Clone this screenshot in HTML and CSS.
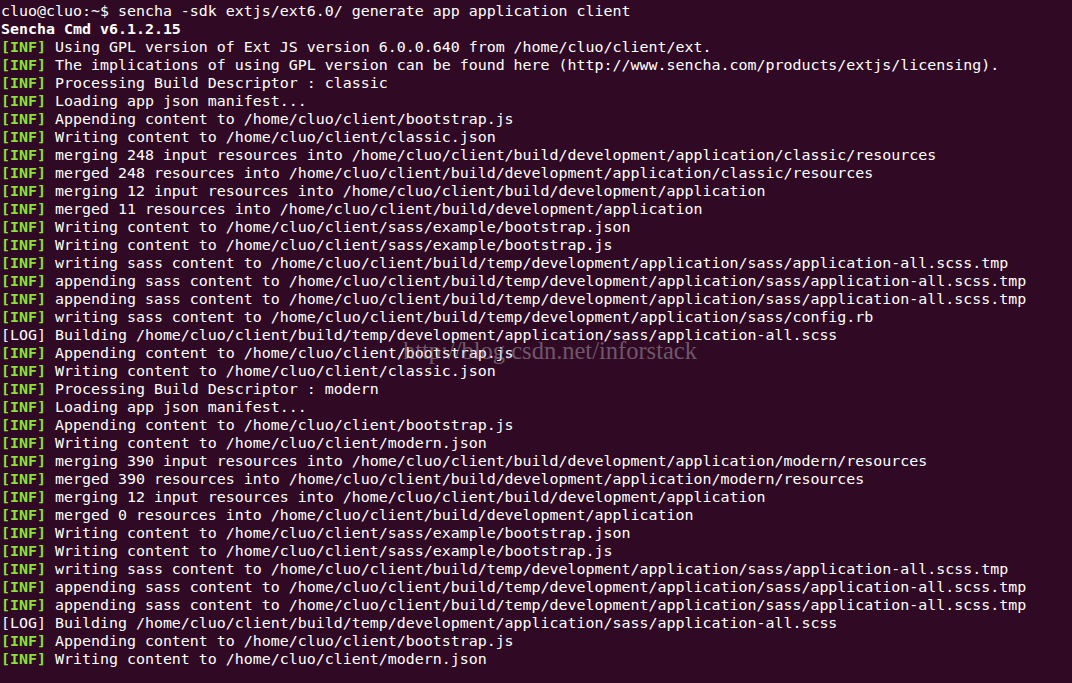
FILE: index.html
```html
<!DOCTYPE html>
<html>
<head>
<meta charset="utf-8">
<link rel="stylesheet" href="styles.css">
</head>
<body>
<div class="term">
<div class="line">cluo@cluo:~$ sencha -sdk extjs/ext6.0/ generate app application client</div>
<div class="line b">Sencha Cmd v6.1.2.15</div>
<div class="line"><span class="inf">[INF]</span> Using GPL version of Ext JS version 6.0.0.640 from /home/cluo/client/ext.</div>
<div class="line"><span class="inf">[INF]</span> The implications of using GPL version can be found here (http://www.sencha.com/products/extjs/licensing).</div>
<div class="line"><span class="inf">[INF]</span> Processing Build Descriptor : classic</div>
<div class="line"><span class="inf">[INF]</span> Loading app json manifest...</div>
<div class="line"><span class="inf">[INF]</span> Appending content to /home/cluo/client/bootstrap.js</div>
<div class="line"><span class="inf">[INF]</span> Writing content to /home/cluo/client/classic.json</div>
<div class="line"><span class="inf">[INF]</span> merging 248 input resources into /home/cluo/client/build/development/application/classic/resources</div>
<div class="line"><span class="inf">[INF]</span> merged 248 resources into /home/cluo/client/build/development/application/classic/resources</div>
<div class="line"><span class="inf">[INF]</span> merging 12 input resources into /home/cluo/client/build/development/application</div>
<div class="line"><span class="inf">[INF]</span> merged 11 resources into /home/cluo/client/build/development/application</div>
<div class="line"><span class="inf">[INF]</span> Writing content to /home/cluo/client/sass/example/bootstrap.json</div>
<div class="line"><span class="inf">[INF]</span> Writing content to /home/cluo/client/sass/example/bootstrap.js</div>
<div class="line"><span class="inf">[INF]</span> writing sass content to /home/cluo/client/build/temp/development/application/sass/application-all.scss.tmp</div>
<div class="line"><span class="inf">[INF]</span> appending sass content to /home/cluo/client/build/temp/development/application/sass/application-all.scss.tmp</div>
<div class="line"><span class="inf">[INF]</span> appending sass content to /home/cluo/client/build/temp/development/application/sass/application-all.scss.tmp</div>
<div class="line"><span class="inf">[INF]</span> writing sass content to /home/cluo/client/build/temp/development/application/sass/config.rb</div>
<div class="line">[LOG] Building /home/cluo/client/build/temp/development/application/sass/application-all.scss</div>
<div class="line"><span class="inf">[INF]</span> Appending content to /home/cluo/client/bootstrap.js</div>
<div class="line"><span class="inf">[INF]</span> Writing content to /home/cluo/client/classic.json</div>
<div class="line"><span class="inf">[INF]</span> Processing Build Descriptor : modern</div>
<div class="line"><span class="inf">[INF]</span> Loading app json manifest...</div>
<div class="line"><span class="inf">[INF]</span> Appending content to /home/cluo/client/bootstrap.js</div>
<div class="line"><span class="inf">[INF]</span> Writing content to /home/cluo/client/modern.json</div>
<div class="line"><span class="inf">[INF]</span> merging 390 input resources into /home/cluo/client/build/development/application/modern/resources</div>
<div class="line"><span class="inf">[INF]</span> merged 390 resources into /home/cluo/client/build/development/application/modern/resources</div>
<div class="line"><span class="inf">[INF]</span> merging 12 input resources into /home/cluo/client/build/development/application</div>
<div class="line"><span class="inf">[INF]</span> merged 0 resources into /home/cluo/client/build/development/application</div>
<div class="line"><span class="inf">[INF]</span> Writing content to /home/cluo/client/sass/example/bootstrap.json</div>
<div class="line"><span class="inf">[INF]</span> Writing content to /home/cluo/client/sass/example/bootstrap.js</div>
<div class="line"><span class="inf">[INF]</span> writing sass content to /home/cluo/client/build/temp/development/application/sass/application-all.scss.tmp</div>
<div class="line"><span class="inf">[INF]</span> appending sass content to /home/cluo/client/build/temp/development/application/sass/application-all.scss.tmp</div>
<div class="line"><span class="inf">[INF]</span> appending sass content to /home/cluo/client/build/temp/development/application/sass/application-all.scss.tmp</div>
<div class="line">[LOG] Building /home/cluo/client/build/temp/development/application/sass/application-all.scss</div>
<div class="line"><span class="inf">[INF]</span> Appending content to /home/cluo/client/bootstrap.js</div>
<div class="line"><span class="inf">[INF]</span> Writing content to /home/cluo/client/modern.json</div>
</div>
<div class="watermark">http://blog.csdn.net/inforstack</div>
</body>
</html>
```
FILE: styles.css
```css
html, body {
  margin: 0;
  padding: 0;
  background: #300a24;
  width: 1072px;
  height: 683px;
  overflow: hidden;
}
body {
  position: relative;
}
.term {
  padding: 2px 0 0 1px;
  font-family: "DejaVu Sans Mono", monospace;
  font-size: 14.94px;
  line-height: 18px;
  color: #ffffff;
}
.line {
  height: 18px;
  white-space: pre;
}
.b {
  font-weight: bold;
}
.inf {
  color: #8ae234;
  font-weight: bold;
}
.watermark {
  position: absolute;
  left: 403px;
  top: 339px;
  font-family: "Liberation Serif", "DejaVu Serif", serif;
  font-size: 24.5px;
  line-height: 1;
  color: rgba(175, 165, 175, 0.5);
  white-space: nowrap;
}
```
